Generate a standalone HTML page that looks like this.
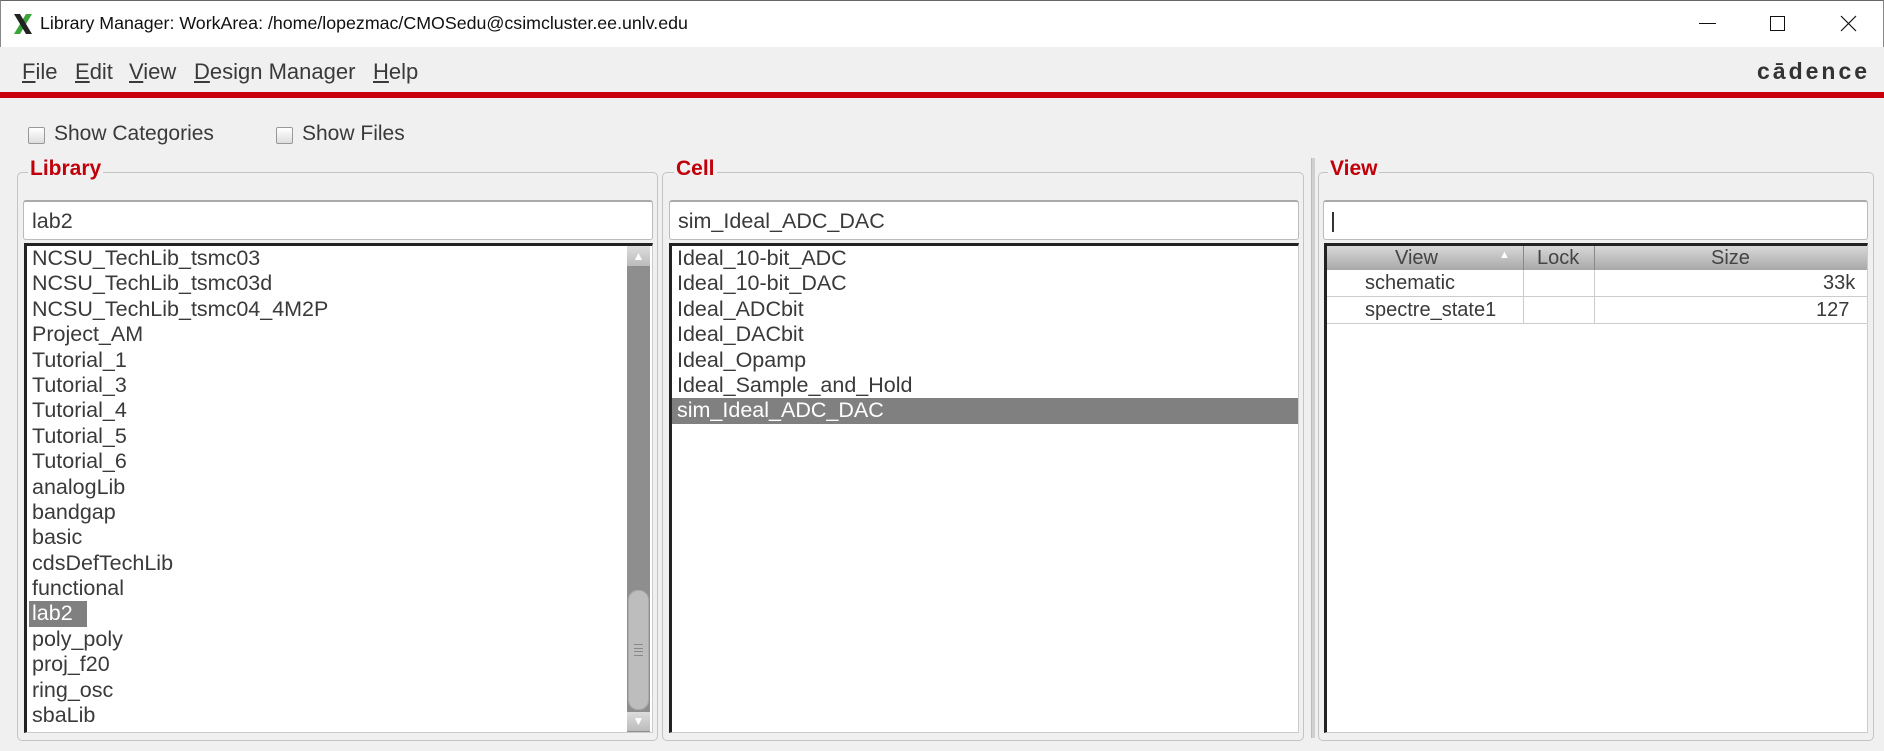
<!DOCTYPE html>
<html><head><meta charset="utf-8"><style>
*{margin:0;padding:0;box-sizing:border-box}
body{width:1884px;height:751px;background:#f0f0f0;font-family:"Liberation Sans",sans-serif;position:relative;overflow:hidden;color:#3a3a3a}
.a{position:absolute}
.title{left:0;top:0;width:1884px;height:47px;background:#fff;border-top:1px solid #666;border-left:1px solid #888;border-right:1px solid #888}
.menu span{position:absolute;top:59px;font-size:22px;color:#3a3a3a}
.frame{position:absolute;border:1px solid #c4c4c4;border-radius:5px;top:172px;height:569px}
.lbl{position:absolute;top:157px;font-size:21px;font-weight:bold;color:#c0000a;background:#f0f0f0;padding:0 2px}
.tb{position:absolute;top:200px;height:40px;background:#fff;border:1px solid #bbb;border-top:2px solid #aaa;border-radius:3px;font-size:21.5px;padding:7px 0 0 8px;color:#3a3a3a}
.list{position:absolute;top:243px;height:490px;background:#fff;border-top:3px solid #222;border-left:3px solid #222;border-right:1px solid #ccc;border-bottom:1px solid #ccc}
.list div{height:25.4px;line-height:25.4px;font-size:21.5px;padding-left:5px;white-space:nowrap;color:#3a3a3a}
.sel{background:#808080;color:#fff!important}
.cb{position:absolute;top:127px;width:17px;height:17px;border:1px solid #999;border-radius:2px;background:linear-gradient(#fff,#ddd)}
</style></head><body>
<div class="a title"></div>
<svg class="a" style="left:13px;top:13px" width="20" height="22" viewBox="0 0 20 22"><path d="M13 1 L19 1 L7 21 L1 21Z" fill="#3aa33a"/><path d="M1 1 L7 1 L19 21 L13 21Z" fill="#222"/></svg>
<div class="a" style="left:40px;top:13px;font-size:17.8px;color:#111">Library Manager: WorkArea: /home/lopezmac/CMOSedu@csimcluster.ee.unlv.edu</div>
<div class="a" style="left:1699px;top:23px;width:17px;height:1px;background:#111"></div>
<div class="a" style="left:1770px;top:16px;width:15px;height:15px;border:1px solid #111"></div>
<svg class="a" style="left:1840px;top:15px" width="17" height="17"><path d="M1 1L16 16M16 1L1 16" stroke="#111" stroke-width="1.2"/></svg>
<div class="menu">
<span style="left:22px"><u>F</u>ile</span><span style="left:75px"><u>E</u>dit</span><span style="left:129px"><u>V</u>iew</span><span style="left:194px"><u>D</u>esign Manager</span><span style="left:373px"><u>H</u>elp</span>
</div>
<div class="a" style="left:1757px;top:58px;font-size:23px;font-weight:bold;letter-spacing:3px;color:#333">cādence</div>
<div class="a" style="left:0;top:92px;width:1884px;height:6px;background:#c8000a"></div>
<div class="cb" style="left:28px"></div><div class="a" style="left:54px;top:122px;font-size:21px">Show Categories</div>
<div class="cb" style="left:276px"></div><div class="a" style="left:302px;top:122px;font-size:21px">Show Files</div>

<div class="frame" style="left:17px;width:641px"></div><div class="lbl" style="left:28px">Library</div>
<div class="tb" style="left:23px;width:630px">lab2</div>
<div class="list" style="left:24px;width:629px">
<div>NCSU_TechLib_tsmc03</div><div>NCSU_TechLib_tsmc03d</div><div>NCSU_TechLib_tsmc04_4M2P</div><div>Project_AM</div><div>Tutorial_1</div><div>Tutorial_3</div><div>Tutorial_4</div><div>Tutorial_5</div><div>Tutorial_6</div><div>analogLib</div><div>bandgap</div><div>basic</div><div>cdsDefTechLib</div><div>functional</div><div><span class="sel" style="display:inline-block;padding:0 14px 0 3px;margin-left:-3px">lab2</span></div><div>poly_poly</div><div>proj_f20</div><div>ring_osc</div><div>sbaLib</div>
</div>
<div class="a" style="left:627px;top:246px;width:23px;height:486px;background:#8e8e8e"></div>
<div class="a" style="left:627px;top:246px;width:23px;height:20px;background:linear-gradient(#ddd,#bbb);color:#fff;font-size:12px;text-align:center;line-height:20px">▲</div>
<div class="a" style="left:628px;top:590px;width:21px;height:120px;background:#bdbdbd;border:1px solid #aaa;border-radius:10px"></div>
<div class="a" style="left:634px;top:644px;width:9px;height:12px;border-top:1px solid #888;border-bottom:1px solid #888"></div>
<div class="a" style="left:634px;top:648px;width:9px;height:4px;border-top:1px solid #888;border-bottom:1px solid #888"></div>
<div class="a" style="left:627px;top:712px;width:23px;height:19px;background:linear-gradient(#ddd,#bbb);color:#fff;font-size:12px;text-align:center;line-height:19px">▼</div>

<div class="frame" style="left:662px;width:642px"></div><div class="lbl" style="left:674px">Cell</div>
<div class="tb" style="left:669px;width:630px">sim_Ideal_ADC_DAC</div>
<div class="list" style="left:669px;width:630px">
<div>Ideal_10-bit_ADC</div><div>Ideal_10-bit_DAC</div><div>Ideal_ADCbit</div><div>Ideal_DACbit</div><div>Ideal_Opamp</div><div>Ideal_Sample_and_Hold</div><div class="sel">sim_Ideal_ADC_DAC</div>
</div>

<div class="a" style="left:1311px;top:158px;width:4px;height:580px;background:#d0d0d0;border-left:1px solid #bbb"></div>
<div class="frame" style="left:1318px;width:556px"></div><div class="lbl" style="left:1328px">View</div>
<div class="tb" style="left:1323px;width:545px"><span style="display:inline-block;width:2px;height:20px;background:#333;margin-top:3px"></span></div>
<div class="list" style="left:1324px;width:544px"></div>
<div class="a" style="left:1327px;top:246px;width:540px;height:24px;background:linear-gradient(#d8d8d8,#a8a8a8);font-size:20px;color:#444">
<span class="a" style="left:68px;top:1px">View</span><span class="a" style="left:172px;top:3px;font-size:11px;color:#fff">▲</span>
<span class="a" style="left:196px;top:0;width:1px;height:24px;background:#888"></span>
<span class="a" style="left:210px;top:1px">Lock</span>
<span class="a" style="left:267px;top:0;width:1px;height:24px;background:#888"></span>
<span class="a" style="left:384px;top:1px">Size</span></div>
<div class="a" style="left:1327px;top:270px;width:540px;height:54px;font-size:20px;color:#3a3a3a">
<div class="a" style="left:0;top:26px;width:540px;height:1px;background:#ccc"></div>
<div class="a" style="left:0;top:53px;width:540px;height:1px;background:#ccc"></div>
<div class="a" style="left:196px;top:0;width:1px;height:54px;background:#ccc"></div>
<div class="a" style="left:267px;top:0;width:1px;height:54px;background:#ccc"></div>
<span class="a" style="left:38px;top:2px">schematic</span><span class="a" style="left:496px;top:2px">33k</span>
<span class="a" style="left:38px;top:29px">spectre_state1</span><span class="a" style="left:489px;top:29px">127</span>
</div>
</body></html>
